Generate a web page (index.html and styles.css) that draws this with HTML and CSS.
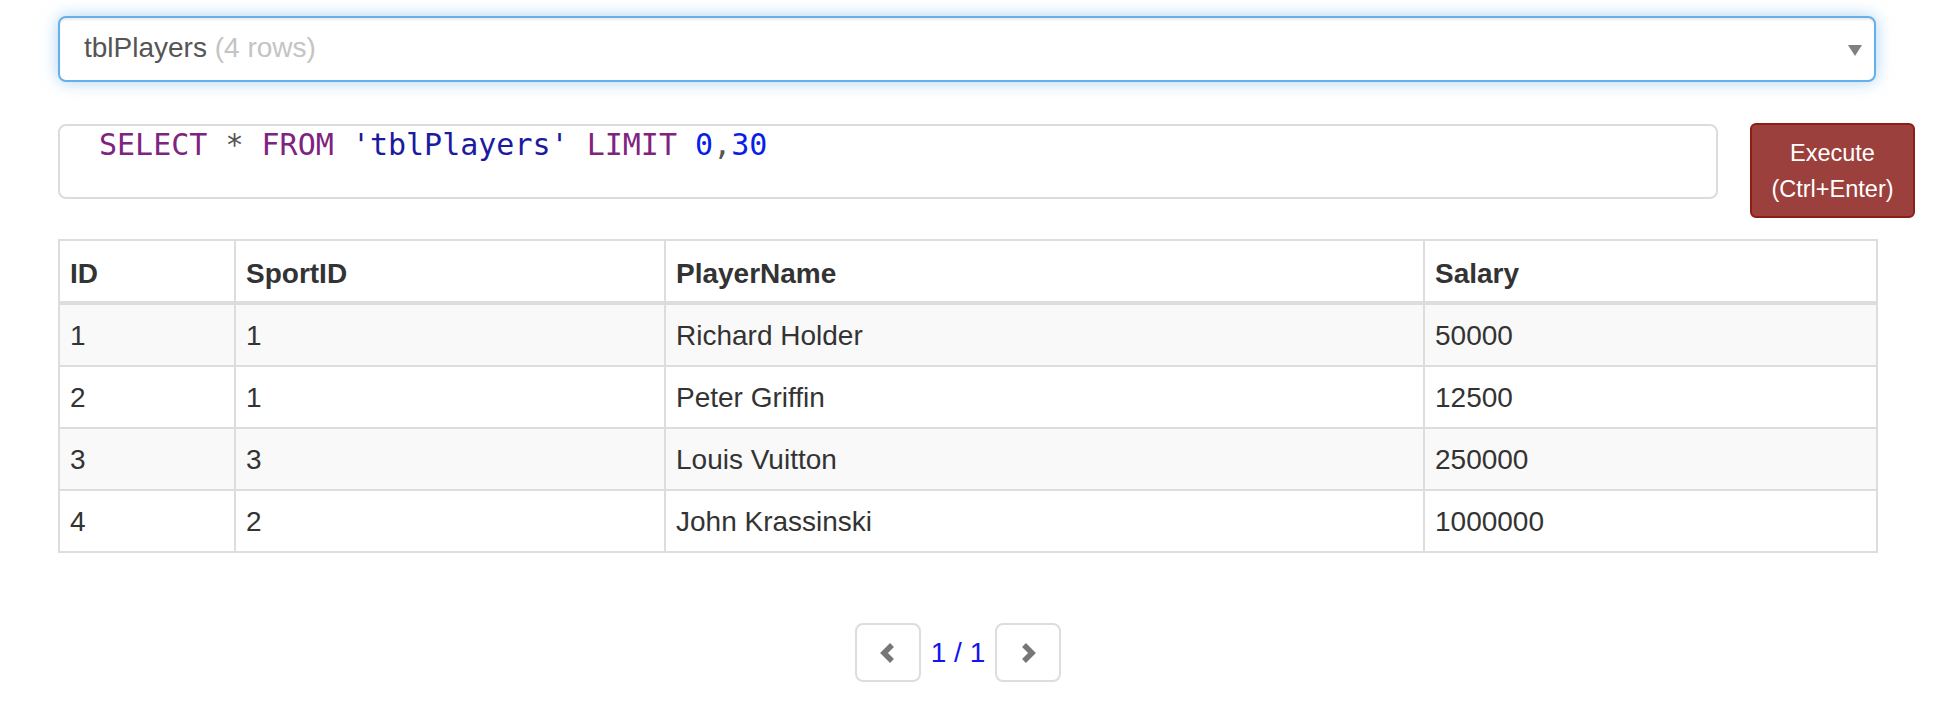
FILE: index.html
```html
<!DOCTYPE html>
<html>
<head>
<meta charset="utf-8">
<link rel="stylesheet" href="styles.css">
</head>
<body>
<div class="page">
  <div class="select">
    <span class="select-text">tblPlayers <span class="muted">(4 rows)</span></span>
    <span class="caret"></span>
  </div>

  <div class="query-row">
    <div class="editor"><span class="kw">SELECT</span> <span class="op">*</span> <span class="kw">FROM</span> <span class="str">'tblPlayers'</span> <span class="kw">LIMIT</span> <span class="num">0</span><span class="op">,</span><span class="num">30</span></div>
    <button class="execute">Execute<br>(Ctrl+Enter)</button>
  </div>

  <table class="grid">
    <colgroup>
      <col class="c-id"><col class="c-sport"><col class="c-name"><col class="c-salary">
    </colgroup>
    <thead>
      <tr><th>ID</th><th>SportID</th><th>PlayerName</th><th>Salary</th></tr>
    </thead>
    <tbody>
      <tr><td>1</td><td>1</td><td>Richard Holder</td><td>50000</td></tr>
      <tr><td>2</td><td>1</td><td>Peter Griffin</td><td>12500</td></tr>
      <tr><td>3</td><td>3</td><td>Louis Vuitton</td><td>250000</td></tr>
      <tr><td>4</td><td>2</td><td>John Krassinski</td><td>1000000</td></tr>
    </tbody>
  </table>

  <div class="pager">
    <button class="pg-btn" aria-label="Previous">
      <svg width="16" height="22" viewBox="0 0 16 22"><polyline points="12,3 4,11 12,19" fill="none" stroke="#777" stroke-width="5.5" stroke-linejoin="miter"/></svg>
    </button>
    <span class="pg-text">1 / 1</span>
    <button class="pg-btn" aria-label="Next">
      <svg width="16" height="22" viewBox="0 0 16 22"><polyline points="4,3 12,11 4,19" fill="none" stroke="#777" stroke-width="5.5" stroke-linejoin="miter"/></svg>
    </button>
  </div>
</div>
</body>
</html>
```

FILE: styles.css
```css
html, body {
  margin: 0;
  padding: 0;
  background: #fff;
}

.page {
  width: 1818px;
  padding: 16px 0 0 58px;
  font-family: "Liberation Sans", Arial, Helvetica, sans-serif;
  color: #333;
}

.select {
  box-sizing: border-box;
  height: 66px;
  border: 2px solid #66afe9;
  border-radius: 8px;
  box-shadow: inset 0 2px 2px rgba(0,0,0,.075), 0 0 16px rgba(102,175,233,.55);
  display: flex;
  align-items: center;
  justify-content: space-between;
  padding: 0 12px 0 24px;
  font-size: 28px;
  color: #555;
  background: #fff;
}

.select-text {
  margin-top: -2px;
}

.muted {
  color: #c4c4c4;
}

.caret {
  width: 0;
  height: 0;
  border-left: 7px solid transparent;
  border-right: 7px solid transparent;
  border-top: 11px solid #808080;
  margin-top: 3px;
}

.query-row {
  display: flex;
  align-items: flex-start;
  gap: 32px;
  margin-top: 41px;
  width: 1857px;
}

.editor {
  box-sizing: border-box;
  width: 1660px;
  height: 75px;
  margin-top: 1px;
  border: 2px solid #dcdcdc;
  border-radius: 8px;
  padding: 0 0 0 39px;
  font-family: "DejaVu Sans Mono", "Liberation Mono", monospace;
  font-size: 30px;
  line-height: 37px;
  color: #555;
  white-space: pre;
}

.kw { color: #7f2380; }
.str { color: #1b1ba0; }
.num { color: #0a1ee6; }
.op { color: #555; }

.execute {
  box-sizing: border-box;
  width: 165px;
  height: 95px;
  padding: 10px 0;
  border: 2px solid #8e1c17;
  border-radius: 6px;
  background: #9c403d;
  color: #fff;
  font-family: "Liberation Sans", Arial, Helvetica, sans-serif;
  font-size: 23.5px;
  line-height: 36px;
  text-align: center;
}

.grid {
  width: 1818px;
  margin-top: 21px;
  border-collapse: collapse;
  table-layout: fixed;
  font-size: 28px;
  line-height: 40px;
  color: #333;
}

.c-id { width: 176px; }
.c-sport { width: 430px; }
.c-name { width: 759px; }
.c-salary { width: 453px; }

.grid th,
.grid td {
  border: 2px solid #ddd;
  padding: 11px 10px 9px;
  text-align: left;
  vertical-align: top;
}

.grid th {
  font-weight: bold;
  border-bottom-width: 4px;
  padding: 13px 10px 7px;
}

.grid tbody tr:nth-child(odd) td {
  background: #f9f9f9;
}

.pager {
  display: flex;
  justify-content: center;
  align-items: center;
  gap: 10px;
  margin-top: 70px;
  padding-right: 18px;
}

.pg-btn {
  box-sizing: border-box;
  width: 66px;
  height: 59px;
  border: 2px solid #ddd;
  border-radius: 8px;
  background: #fff;
  display: flex;
  align-items: center;
  justify-content: center;
  padding: 0;
}

.pg-text {
  font-size: 28px;
  color: #1414f0;
  line-height: 40px;
}
```
